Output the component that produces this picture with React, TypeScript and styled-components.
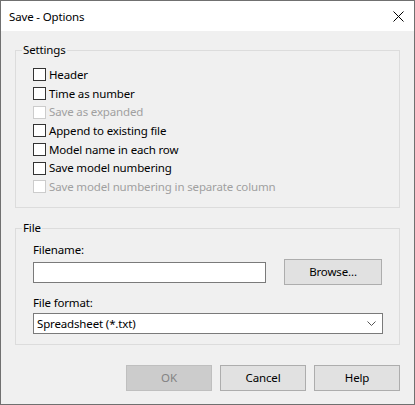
import React from "react";
import styled, { createGlobalStyle } from "styled-components";

const Global = createGlobalStyle`
  html, body { margin: 0; padding: 0; background: #f0f0f0; }
  body { font-family: "Noto Sans", "Open Sans", sans-serif; font-size: 11.5px; letter-spacing: -0.15px; color: #000; }
  * { box-sizing: border-box; }
`;

const Window = styled.div`
  width: 415px;
  height: 405px;
  border: 1px solid #707070;
  background: #f0f0f0;
  display: flex;
  flex-direction: column;
`;

const TitleBar = styled.div`
  height: 30px;
  background: #fff;
  display: flex;
  align-items: center;
  justify-content: space-between;
  padding: 0 9px 0 8px;
`;

const Title = styled.span`
  font-size: 11.5px;
  line-height: 16px;
  margin-top: 1px;
`;

const CloseIcon = styled.svg`
  width: 11px;
  height: 11px;
  margin-right: 1px;
`;

const Body = styled.div`
  flex: 1;
  display: flex;
  flex-direction: column;
  padding: 11px 14px 0 14px;
`;

const Group = styled.fieldset<{ $pb: number; $pt: number }>`
  margin: 0;
  border: 1px solid #dcdcdc;
  padding: ${(p) => p.$pt}px 16px ${(p) => p.$pb}px 17px;
  display: flex;
  flex-direction: column;
  min-width: 0;
  & + & { margin-top: 12px; }
`;

const Legend = styled.legend`
  padding: 0 1px;
  margin-left: -11px;
  line-height: 16px;
`;

const CheckRow = styled.label<{ $h: number; $disabled?: boolean }>`
  height: ${(p) => p.$h}px;
  display: flex;
  align-items: center;
  gap: 3px;
  color: ${(p) => (p.$disabled ? "#a0a0a0" : "#000")};
  line-height: 16px;
`;

const Box = styled.span<{ $disabled?: boolean }>`
  width: 13px;
  height: 13px;
  background: #fff;
  border: 1px solid ${(p) => (p.$disabled ? "#cccccc" : "#333333")};
  flex: none;
`;

const FieldLabel = styled.div<{ $mt?: number }>`
  line-height: 16px;
  margin-top: ${(p) => p.$mt ?? 0}px;
`;

const FileRow = styled.div`
  display: flex;
  align-items: center;
  gap: 18px;
  margin-top: 1px;
`;

const TextInput = styled.div`
  width: 233px;
  height: 21px;
  background: #fff;
  border: 1px solid #7a7a7a;
`;

const Button = styled.div<{ $w: number; $disabled?: boolean }>`
  width: ${(p) => p.$w}px;
  height: 26px;
  display: flex;
  align-items: center;
  justify-content: center;
  background: ${(p) => (p.$disabled ? "#cccccc" : "#e1e1e1")};
  border: 1px solid ${(p) => (p.$disabled ? "#bfbfbf" : "#adadad")};
  color: ${(p) => (p.$disabled ? "#838383" : "#000")};
  line-height: 16px;
`;

const Combo = styled.div`
  margin-top: 2px;
  width: 350px;
  height: 21px;
  background: #fff;
  border: 1px solid #7a7a7a;
  display: flex;
  align-items: center;
  justify-content: space-between;
  padding: 0 6px 0 3px;
  line-height: 16px;
`;

const Footer = styled.div`
  display: flex;
  justify-content: flex-end;
  gap: 8px;
  margin-top: 20px;
`;

const settings: { label: string; disabled?: boolean; h: number }[] = [
  { label: "Header", h: 19 },
  { label: "Time as number", h: 19 },
  { label: "Save as expanded", disabled: true, h: 18 },
  { label: "Append to existing file", h: 19 },
  { label: "Model name in each row", h: 19 },
  { label: "Save model numbering", h: 18 },
  { label: "Save model numbering in separate column", disabled: true, h: 19 },
];

export default function App() {
  return (
    <>
      <Global />
      <Window>
        <TitleBar>
          <Title>Save - Options</Title>
          <CloseIcon viewBox="0 0 11 11">
            <path d="M0.5 0.5 L10.5 10.5 M10.5 0.5 L0.5 10.5" stroke="#000" strokeWidth="1" fill="none" />
          </CloseIcon>
        </TitleBar>
        <Body>
          <Group $pt={7} $pb={11}>
            <Legend>Settings</Legend>
            {settings.map((s) => (
              <CheckRow key={s.label} $h={s.h} $disabled={s.disabled}>
                <Box $disabled={s.disabled} />
                {s.label}
              </CheckRow>
            ))}
          </Group>
          <Group $pt={6} $pb={10}>
            <Legend>File</Legend>
            <FieldLabel>Filename:</FieldLabel>
            <FileRow>
              <TextInput />
              <Button $w={98}>Browse...</Button>
            </FileRow>
            <FieldLabel $mt={10}>File format:</FieldLabel>
            <Combo>
              <span>Spreadsheet (*.txt)</span>
              <svg width="9" height="5" viewBox="0 0 9 5">
                <path d="M0.5 0.5 L4.5 4.5 L8.5 0.5" stroke="#555" fill="none" strokeWidth="1" />
              </svg>
            </Combo>
          </Group>
          <Footer>
            <Button $w={86} $disabled>OK</Button>
            <Button $w={86}>Cancel</Button>
            <Button $w={86}>Help</Button>
          </Footer>
        </Body>
      </Window>
    </>
  );
}
